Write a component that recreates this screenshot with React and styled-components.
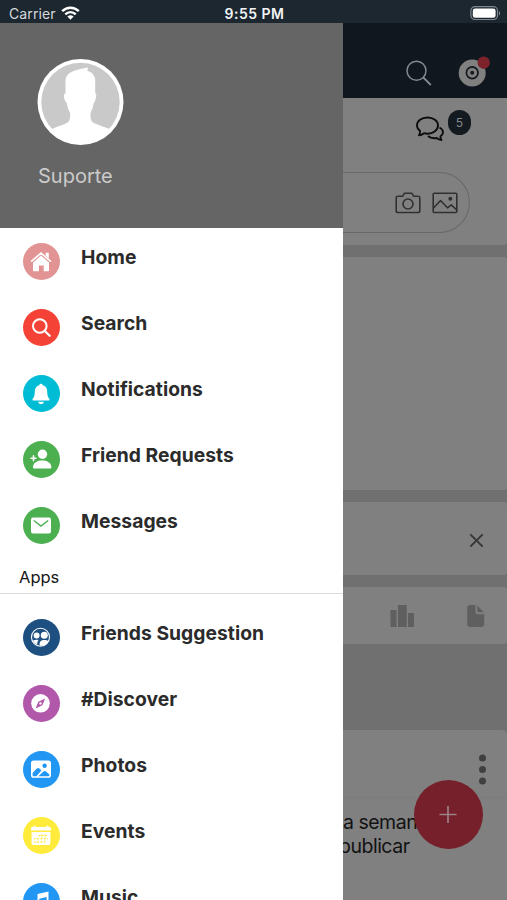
import React from "react";
import styled, { createGlobalStyle } from "styled-components";

const GlobalStyle = createGlobalStyle`
  * {
    box-sizing: border-box;
  }
  body {
    margin: 0;
    font-family: Inter, "Liberation Sans", sans-serif;
  }
  svg {
    display: block;
    flex-shrink: 0;
  }
`;

const Screen = styled.div`
  width: 507px;
  height: 900px;
  display: flex;
  flex-direction: column;
  overflow: hidden;
  background-color: #707070;
`;

// status bar

const StatusBar = styled.header`
  height: 23px;
  flex-shrink: 0;
  display: grid;
  grid-template-columns: 1fr auto 1fr;
  align-items: center;
  padding: 4px 6px 0 9px;
  background-color: #1c2730;
  color: #d5dade;
  font-size: 14px;
  line-height: 18px;
`;

const Carrier = styled.div`
  display: flex;
  align-items: center;
  gap: 5px;
  letter-spacing: 0.1px;
`;

const Clock = styled.div`
  padding-right: 1px;
  font-size: 14px;
  font-weight: 600;
  color: #f2f4f5;
  letter-spacing: 0.5px;
`;

const Battery = styled.div`
  justify-self: end;
`;

const Body = styled.div`
  flex: 1;
  min-height: 0;
  display: flex;
`;

// drawer

const Drawer = styled.nav`
  width: 343px;
  flex-shrink: 0;
  overflow: hidden;
  background-color: #ffffff;
`;

const Profile = styled.div`
  height: 205px;
  padding: 36px 37px 0;
  background-color: #656565;
`;

const UserName = styled.div`
  margin-top: 18px;
  padding-left: 1px;
  font-size: 20px;
  line-height: 26px;
  color: #cbcbcb;
`;

const MenuItem = styled.div`
  height: 66px;
  padding: 15px 23px 0;
  display: flex;
  align-items: flex-start;
  gap: 21px;
`;

const Bubble = styled.div`
  width: 37px;
  height: 37px;
  padding-right: 2px;
  flex-shrink: 0;
  display: flex;
  align-items: center;
  justify-content: center;
  border-radius: 50%;
  background-color: ${(props) => props.$color};
`;

const MenuLabel = styled.div`
  padding-top: 2px;
  font-size: 19.3px;
  font-weight: 650;
  line-height: 24px;
  letter-spacing: 0.03px;
  white-space: nowrap;
  color: #2b2b2b;
`;

const SectionTitle = styled.div`
  height: 36px;
  margin-bottom: 10px;
  padding: 9px 19px 0;
  border-bottom: 1px solid #dcdcdc;
  font-size: 16.5px;
  line-height: 20px;
  color: #151515;
`;

// feed

const Feed = styled.main`
  flex: 1;
  min-width: 0;
  display: flex;
  flex-direction: column;
  gap: 12px;
  background-color: #707070;
`;

const TopSection = styled.section`
  height: 222px;
  flex-shrink: 0;
  background-color: #808080;
  border-radius: 0 0 3px 0;
`;

const TopBar = styled.div`
  height: 75px;
  display: flex;
  justify-content: flex-end;
  padding: 33px 16px 0;
  gap: 26px;
  background-color: #11171f;
`;

const ChatRow = styled.div`
  height: 74px;
  display: flex;
  justify-content: flex-end;
  align-items: flex-start;
  gap: 4px;
  padding: 12px 36px 0;
`;

const Count = styled.div`
  width: 23px;
  height: 25px;
  border-radius: 12px;
  background-color: #131b21;
  color: #858789;
  font-size: 12px;
  line-height: 25px;
  text-align: center;
`;

const Composer = styled.div`
  height: 61px;
  width: 127px;
  display: flex;
  align-items: center;
  justify-content: flex-end;
  gap: 11px;
  padding-right: 11px;
  border: 1px solid #686868;
  border-left: none;
  border-radius: 0 31px 31px 0;
`;

const Card = styled.section`
  height: ${(props) => props.$height}px;
  flex-shrink: 0;
  display: flex;
  align-items: center;
  justify-content: flex-end;
  gap: ${(props) => props.$gap || 0}px;
  padding: ${(props) => props.$top || 0}px 22px 0 0;
  background-color: #808080;
  border-radius: 0 3px 3px 0;
`;

const Post = styled.section`
  position: relative;
  height: 170px;
  margin-top: 74px;
  flex-shrink: 0;
  overflow: hidden;
  background-color: #808080;
  border-radius: 0 5px 0 0;
`;

const PostHead = styled.div`
  height: 68px;
  display: flex;
  justify-content: flex-end;
  padding: 23px 20px 0;
  border-bottom: 1px solid #7c7c7c;
`;

const PostText = styled.p`
  margin: 12px 0 0 ${(props) => props.$shift || 0}px;
  font-size: 19.5px;
  line-height: 24px;
  letter-spacing: -0.5px;
  white-space: nowrap;
  color: #121212;

  & + & {
    margin-top: 0;
  }
`;

// floats over the post
const AddButton = styled.button`
  position: absolute;
  top: 50px;
  right: 24px;
  width: 69px;
  height: 69px;
  padding: 0;
  display: flex;
  align-items: center;
  justify-content: center;
  border: none;
  border-radius: 50%;
  background-color: #75202a;
`;

const WifiIcon = () => (
  <svg width="19" height="15" viewBox="0 0 19 15" fill="none">
    <path d="M1.2 5.2C6 .5 13 .5 17.8 5.2" stroke="#fff" strokeWidth="2.5" />
    <path d="M4.3 8.3c3-2.900 7.400-2.900 10.400 0" stroke="#fff" strokeWidth="2.4" />
    <path d="M6.400 10.600a4.500 4.500 0 0 1 6.200 0L9.500 13.800Z" fill="#fff" />
  </svg>
);

const BatteryIcon = () => (
  <svg width="31" height="15" viewBox="0 0 31 15">
    <rect x=".9" y=".7" width="26.6" height="12.8" rx="4" fill="none" stroke="#7f878d" strokeWidth="1.2" />
    <rect x="2.8" y="2.5" width="22.8" height="9.2" rx="2.3" fill="#fff" />
    <path d="M29 5c1.6.7 1.6 3.7 0 4.400Z" fill="#7f878d" />
  </svg>
);

const Avatar = () => (
  <svg width="87" height="86" viewBox="0 0 87 86">
    <defs>
      <clipPath id="face">
        <circle cx="43.5" cy="43" r="40" />
      </clipPath>
    </defs>
    <circle cx="43.5" cy="43" r="43" fill="#fff" />
    <circle cx="43.5" cy="43" r="39.2" fill="#c9c9c9" />
    <path
      clipPath="url(#face)"
      fill="#fff"
      d="M28.5 34.5V22c0-7 6-9.500 12-11.200 4-1.200 7.500-1.300 10.500-2.300l-.6 3.300C55.500 13.500 58 17 58.200 21v13.300c1.600.4 1.200 3.500.3 6-.6 1.900-1.200 3.800-2 4.300-.5 4-1.500 6.600-2.800 8.500-.7 6.500 0 9.500 4.300 11.500 5 2.300 10.500 3.800 14.500 5.500V86H14V70.500c4-2.200 9.500-3.800 14-5.500 5-2.300 5.500-5 5-11.500-1.500-2.200-2.700-5.300-3.200-9.500-1.300-.8-2.500-3.500-2.800-6-.2-2-.1-3.500 1.500-3.500Z"
    />
  </svg>
);

const HomeIcon = () => (
  <svg width="24" height="24" viewBox="0 0 24 24" fill="#fff">
    <path d="M2.600 11.200 12 3.100l9.400 8.100" fill="none" stroke="#fff" strokeWidth="1.700" strokeLinecap="round" />
    <path d="M16.600 2.800h3.200v5.600l-3.200-2.800ZM4 12.400l8-7 8 7v7.800c0 .6-.4 1-1 1h-4.300v-5.800H9.900v5.800H5c-.6 0-1-.4-1-1Z" />
  </svg>
);

const SearchIcon = () => (
  <svg width="24" height="24" viewBox="0 0 24 24" fill="none" stroke="#fff" strokeWidth="2" strokeLinecap="round">
    <circle cx="10.8" cy="10" r="6.800" />
    <path d="m15.800 15 4.900 4.800" strokeWidth="2.200" />
  </svg>
);

const BellIcon = () => (
  <svg width="24" height="24" viewBox="0 0 24 24" fill="#fff">
    <path d="M12 1.800c1 0 1.500.6 1.700 1.400 3 .8 4.500 3.100 4.500 6.300 0 4.200.9 6 2.200 7.400.5.7.1 1.600-.8 1.600H4.400c-.9 0-1.300-.9-.8-1.600 1.300-1.400 2.200-3.200 2.200-7.400 0-3.200 1.500-5.500 4.500-6.300.2-.8.700-1.400 1.700-1.400ZM9 19.700h6c-.5 1.600-1.500 2.300-3 2.300s-2.500-.7-3-2.300Z" />
  </svg>
);

const PersonAddIcon = () => (
  <svg width="24" height="24" viewBox="0 0 24 24" fill="#fff">
    <circle cx="13.5" cy="6.300" r="4.700" />
    <path d="M4.600 20.400c-.7-.2-.7-1.200-.4-2.500.6-3.300 4.500-5.300 9-5.300s8.400 2 9 5.300c.3 1.300.2 2.300-.5 2.500Z" />
    <path d="M4.500 7.700v5M2 10.200h5" stroke="#fff" strokeWidth="1.600" strokeLinecap="round" />
  </svg>
);

const MailIcon = () => (
  <svg width="24" height="24" viewBox="0 0 24 24" fill="none">
    <rect x="2" y="3.500" width="20" height="16" rx="2" fill="#fff" />
    <path d="m5.200 6.800 6.800 5.300 6.800-5.300" stroke="#4caf50" strokeWidth="1.300" strokeLinecap="round" />
  </svg>
);

const GroupIcon = () => (
  <svg width="24" height="24" viewBox="0 0 24 24" fill="#fff">
    <circle cx="11.500" cy="11.300" r="9" fill="none" stroke="#fff" strokeWidth="1.100" />
    <circle cx="7.600" cy="9.400" r="3" />
    <circle cx="15.300" cy="9.200" r="3.500" />
    <path d="M4 14.600c1.500-.8 3.800-1 5.600-.6-1 1-1.500 2.500-1.300 4.800-2-.7-3.500-2.200-4.300-4.200ZM10.700 19.500c-.5-4 1.500-5.400 4.400-5.400 2 0 3.600.4 4.300 1.300-1.500 3-4.700 4.900-8.700 4.100Z" />
  </svg>
);

const CompassIcon = () => (
  <svg width="24" height="24" viewBox="0 0 24 24">
    <circle cx="11.500" cy="11.300" r="9.300" fill="#fff" />
    <path d="m16.200 6.500-2.800 6.700-6.800 3.200 2.700-6.700Z" fill="#b258aa" />
    <circle cx="11.500" cy="11.400" r="1.200" fill="#fff" />
  </svg>
);

const PhotoIcon = () => (
  <svg width="24" height="24" viewBox="0 0 24 24">
    <rect x="2" y="2.600" width="20" height="17.200" rx="2.600" fill="#fff" />
    <circle cx="15.600" cy="7.800" r="2.200" fill="#2196f3" />
    <path d="M3.600 15.100 7.800 10.600c.8-.8 1.800-.8 2.600 0l2 2-5 5.700H4.900c-.8 0-1.300-.5-1.300-1.300ZM9.300 18.300l5.200-4.900c.8-.7 1.800-.7 2.600 0l3.300 3v.7c0 .8-.5 1.200-1.300 1.200Z" fill="#2196f3" />
  </svg>
);

const CalendarIcon = () => (
  <svg width="24" height="24" viewBox="0 0 24 24">
    <path d="M2 6.400V4.600c0-1 .6-1.500 1.600-1.500h1V1.800h2v1.300h10.800V1.800h2v1.300h1c1 0 1.600.5 1.600 1.500v1.800ZM2.600 7.900h18.800v11.400c0 1-.6 1.600-1.600 1.600H4.200c-1 0-1.600-.6-1.600-1.600Z" fill="#fff" />
    <g fill="none" stroke="#ffeb3b" strokeWidth="1.100" strokeDasharray="2 1.200">
      <path d="M9.500 11.600h9.500M5 14.800h14M5 18h11" />
      <path d="M8.500 13.600v6M12.300 10.100v9.500M16 10.100v8.500" strokeWidth=".8" />
    </g>
  </svg>
);

const MusicIcon = () => (
  <svg width="24" height="24" viewBox="0 0 24 24" fill="#fff">
    <path d="M8.500 4 19.500 1.600v14.500h-1.800V7l-7.400 1.700v10H8.500Z" />
    <ellipse cx="7.200" cy="18.700" rx="3.200" ry="2.600" />
    <ellipse cx="16.400" cy="16.500" rx="3.200" ry="2.600" />
  </svg>
);

const mainMenu = [
  { label: "Home", color: "#e29393", Icon: HomeIcon },
  { label: "Search", color: "#f44336", Icon: SearchIcon },
  { label: "Notifications", color: "#00bcd4", Icon: BellIcon },
  { label: "Friend Requests", color: "#4caf50", Icon: PersonAddIcon },
  { label: "Messages", color: "#4caf50", Icon: MailIcon },
];

const appsMenu = [
  { label: "Friends Suggestion", color: "#1d4f80", Icon: GroupIcon },
  { label: "#Discover", color: "#b258aa", Icon: CompassIcon },
  { label: "Photos", color: "#2196f3", Icon: PhotoIcon },
  { label: "Events", color: "#ffeb3b", Icon: CalendarIcon },
  { label: "Music", color: "#2196f3", Icon: MusicIcon },
];

function Menu({ items }) {
  return items.map(({ label, color, Icon }) => (
    <MenuItem key={label}>
      <Bubble $color={color}>
        <Icon />
      </Bubble>
      <MenuLabel>{label}</MenuLabel>
    </MenuItem>
  ));
}

function FeedHeader() {
  return (
    <TopSection>
      <TopBar>
        <svg width="28" height="34" viewBox="0 0 28 34" fill="none" stroke="#85888c" strokeWidth="1.500">
          <circle cx="12.500" cy="14.700" r="9.500" />
          <path d="m19.300 21.500 7.500 7.500" strokeWidth="1.800" />
        </svg>
        <svg width="33" height="34" viewBox="0 0 33 34">
          <circle cx="14.200" cy="17" r="13.500" fill="#808080" />
          <circle cx="14.200" cy="16.800" r="5.800" fill="none" stroke="#161b21" strokeWidth="1.800" />
          <circle cx="14.200" cy="16.800" r="2" fill="#161b21" />
          <circle cx="25.700" cy="6.700" r="6.200" fill="#7b222b" />
        </svg>
      </TopBar>
      <ChatRow>
        <svg width="30" height="34" viewBox="0 0 30 34" fill="none" stroke="#0b0d0f" strokeWidth="1.900" strokeLinejoin="round">
          <path d="M13.500 7.500c6 0 10.500 3.500 10.500 8s-4.500 8.200-10.500 8.200c-1.200 0-2.400-.1-3.500-.5-1.400 1.200-3.200 2-5 2 .9-1.300 1.200-2.900 1-4.400C4 19.300 3 17.500 3 15.500c0-4.500 4.500-8 10.500-8Z" />
          <path d="M25.500 17.500c2.200 1.200 3.500 2.900 3.500 4.700 0 1.600-.9 3-2.500 4-.2 1.400.2 2.700 1 3.800-2-.2-3.600-1-4.800-2-3.500.5-7-.3-8.700-2" />
        </svg>
        <Count>5</Count>
      </ChatRow>
      <Composer>
        <svg width="26" height="24" viewBox="0 0 26 24" fill="none" stroke="#303030" strokeWidth="1.600" strokeLinejoin="round">
          <path d="M3 5.200h4.700l1.800-3h7.300l1.800 3H23c1.200 0 1.800.6 1.800 1.800v12.700c0 1.200-.6 1.800-1.800 1.800H3c-1.200 0-1.800-.6-1.800-1.800V7c0-1.200.6-1.800 1.800-1.800Z" />
          <circle cx="13" cy="13" r="5" />
        </svg>
        <svg width="26" height="24" viewBox="0 0 26 24" fill="none" stroke="#303030" strokeWidth="1.600" strokeLinejoin="round">
          <rect x="1.200" y="2.200" width="23.600" height="19.300" rx="1" />
          <path d="m1.500 17 7-7.500 7 7.300 3.800-3 5.500 5.200" />
          <circle cx="18.300" cy="7.800" r="1.200" fill="#303030" />
        </svg>
      </Composer>
    </TopSection>
  );
}

function App() {
  return (
    <>
      <GlobalStyle />
      <Screen>
        <StatusBar>
          <Carrier>
            Carrier <WifiIcon />
          </Carrier>
          <Clock>9:55 PM</Clock>
          <Battery>
            <BatteryIcon />
          </Battery>
        </StatusBar>
        <Body>
          <Drawer>
            <Profile>
              <Avatar />
              <UserName>Suporte</UserName>
            </Profile>
            <Menu items={mainMenu} />
            <SectionTitle>Apps</SectionTitle>
            <Menu items={appsMenu} />
          </Drawer>
          <Feed>
            <FeedHeader />
            <Card $height={233} />
            <Card $height={73} $top={3}>
              <svg width="17" height="17" viewBox="0 0 17 17" stroke="#363636" strokeWidth="1.900">
                <path d="m2.300 2.300 12.400 12.400M14.700 2.300 2.300 14.700" />
              </svg>
            </Card>
            <Card $height={57} $gap={52}>
              <svg width="25" height="22" viewBox="0 0 25 22" fill="#5f5f5f">
                <path d="M.5 5h6v17h-6ZM8 0h8.700v22H8ZM18 8h6v14h-6Z" />
              </svg>
              <svg width="18" height="22" viewBox="0 0 18 22" fill="#5f5f5f">
                <path d="M3.200 0h5.300v6.500c0 2 .8 2.800 2.800 2.800h5.900V19c0 2-1 3-3 3h-11c-2 0-3-1-3-3V3c0-2 1-3 3-3ZM10.300.4l6.500 6.900h-4.700c-1.200 0-1.800-.6-1.800-1.800Z" />
              </svg>
            </Card>
            <Post>
              <PostHead>
                <svg width="9" height="34" viewBox="0 0 9 34" fill="#3f3f3f">
                  <circle cx="4.500" cy="5" r="3.500" />
                  <circle cx="4.500" cy="16.500" r="3.500" />
                  <circle cx="4.500" cy="28" r="3.500" />
                </svg>
              </PostHead>
              <PostText>a semana</PostText>
              <PostText $shift={-4}>publicar</PostText>
              <AddButton aria-label="Add">
                <svg width="20" height="20" viewBox="0 0 20 20" stroke="#9c8284" strokeWidth="1.700">
                  <path d="M9 1v17M.5 9.500h17" />
                </svg>
              </AddButton>
            </Post>
          </Feed>
        </Body>
      </Screen>
    </>
  );
}

export default App;
